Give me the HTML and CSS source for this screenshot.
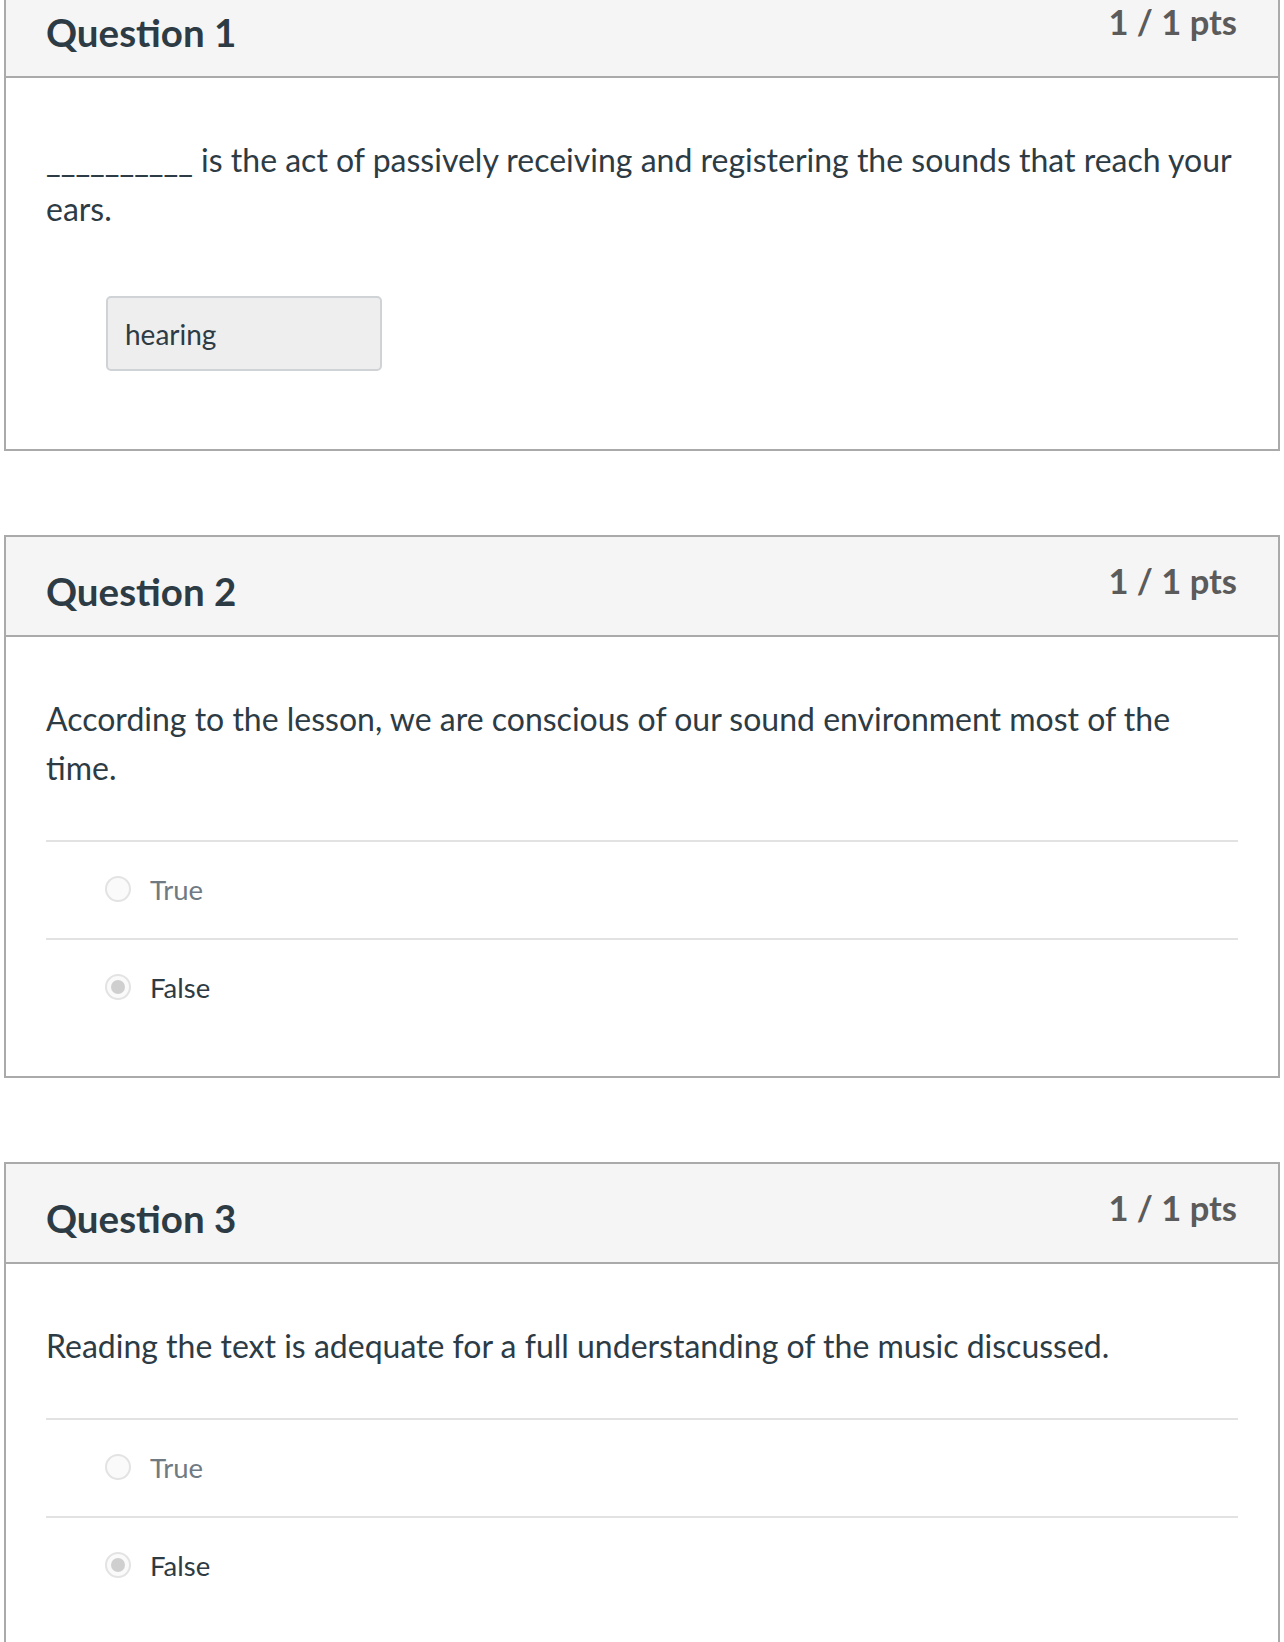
FILE: index.html
```html
<!DOCTYPE html>
<html lang="en">
<head>
<meta charset="utf-8">
<title>Quiz results</title>
<link rel="stylesheet" href="styles.css">
</head>
<body>
<div class="quiz">
  <section class="question">
    <header class="q-header">
      <h2 class="q-title">Question 1</h2>
      <span class="q-pts">1 / 1 pts</span>
    </header>
    <div class="q-body">
      <p class="q-text">__________ is the act of passively receiving and registering the sounds that reach your ears.</p>
      <div class="answer-fill">
        <div class="fill-box">hearing</div>
      </div>
    </div>
  </section>

  <section class="question">
    <header class="q-header">
      <h2 class="q-title">Question 2</h2>
      <span class="q-pts">1 / 1 pts</span>
    </header>
    <div class="q-body">
      <p class="q-text">According to the lesson, we are conscious of our sound environment most of the time.</p>
      <ul class="answers">
        <li class="answer"><span class="radio"></span><span class="label">True</span></li>
        <li class="answer selected"><span class="radio"></span><span class="label">False</span></li>
      </ul>
    </div>
  </section>

  <section class="question">
    <header class="q-header">
      <h2 class="q-title">Question 3</h2>
      <span class="q-pts">1 / 1 pts</span>
    </header>
    <div class="q-body">
      <p class="q-text">Reading the text is adequate for a full understanding of the music discussed.</p>
      <ul class="answers">
        <li class="answer"><span class="radio"></span><span class="label">True</span></li>
        <li class="answer selected"><span class="radio"></span><span class="label">False</span></li>
      </ul>
    </div>
  </section>
</div>
</body>
</html>
```

FILE: styles.css
```css
html, body {
  margin: 0;
  padding: 0;
  background: #ffffff;
}

body {
  font-family: Lato, "Open Sans", "Liberation Sans", sans-serif;
  color: #2d3b45;
}

.quiz {
  margin: -24px 4px 0 4px;
  display: flex;
  flex-direction: column;
  gap: 84px;
}

.question {
  border: 2px solid #aaaaaa;
  background: #ffffff;
}

.q-header {
  height: 98px;
  background: #f5f5f5;
  border-bottom: 2px solid #aaaaaa;
  padding: 0 41px 0 40px;
  display: flex;
  justify-content: space-between;
  align-items: flex-start;
}

.q-title {
  margin: 32px 0 0 0;
  font-size: 38.5px;
  line-height: 44px;
  font-weight: 700;
  color: #2d3b45;
}

.q-pts {
  margin-top: 24px;
  font-size: 34.5px;
  line-height: 40px;
  font-weight: 700;
  color: #5b5b5b;
}

.q-body {
  padding: 57px 40px 40px 40px;
}

.q-text {
  margin: 0;
  font-size: 32px;
  line-height: 49px;
  color: #2d3b45;
}

.answer-fill {
  padding: 63px 0 38px 60px;
}

.fill-box {
  width: 276px;
  height: 75px;
  box-sizing: border-box;
  background: #eeeeee;
  border: 2px solid #cfd3d6;
  border-radius: 5px;
  padding: 0 17px;
  display: flex;
  align-items: center;
  font-size: 28px;
  color: #2d3b45;
}

.answers {
  list-style: none;
  margin: 48px 0 0 0;
  padding: 0;
}

.answer {
  border-top: 2px solid #e2e2e2;
  height: 96px;
  box-sizing: content-box;
  padding: 0 0 0 59px;
  display: flex;
  align-items: center;
  gap: 19px;
}

.answer > * {
  position: relative;
  top: -1px;
}

.radio {
  width: 26px;
  height: 26px;
  box-sizing: border-box;
  border-radius: 50%;
  border: 2px solid #e3e3e3;
  background: #fafafa;
  display: flex;
  align-items: center;
  justify-content: center;
  flex: none;
}

.answer.selected .radio::after {
  content: "";
  width: 14px;
  height: 14px;
  border-radius: 50%;
  background: #cfcfcf;
}

.label {
  font-size: 27.5px;
  color: #6f7a83;
}

.answer.selected .label {
  color: #2d3b45;
}
```
